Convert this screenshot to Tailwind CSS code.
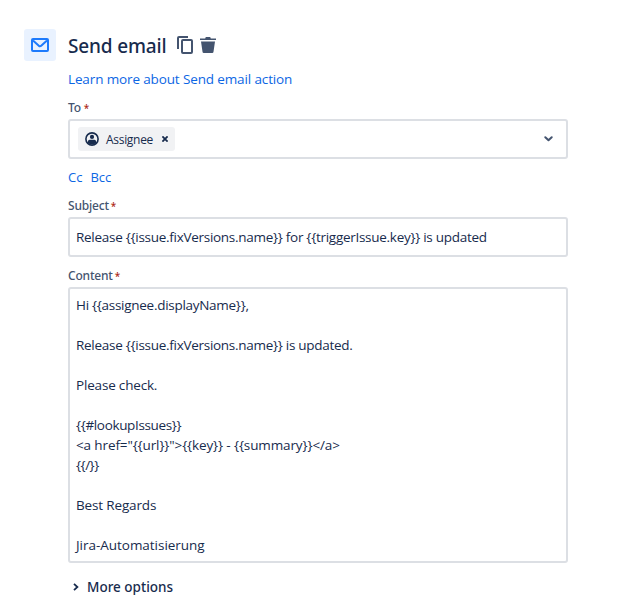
<!doctype html>
<html lang="en">
<head>
  <meta charset="UTF-8">
  <meta name="viewport" content="width=device-width, initial-scale=1.0">
  <title>Send email</title>
  <script src="https://cdn.jsdelivr.net/npm/@tailwindcss/browser@4"></script>
</head>
<body class="h-[616px] overflow-hidden bg-white font-['Open_Sans','Noto_Sans',sans-serif] text-sm leading-5 text-[#172b4d]">
  <main class="flex gap-3 pt-[29px] pl-6">
    <div class="flex size-8 shrink-0 items-center justify-center rounded-[3px] bg-[#e9f2ff]">
      <svg class="h-[14px] w-[18px]" viewBox="0 0 18 14" fill="none" stroke="#1d7afc" stroke-width="2" stroke-linejoin="round">
        <rect x="1" y="1" width="16" height="12" rx="1"></rect>
        <path d="M2 2.5l5.8 5.2a1.8 1.8 0 0 0 2.4 0L16 2.5"></path>
      </svg>
    </div>

    <div class="w-[500px]">
      <header class="flex h-8 items-center">
        <h1 class="w-[109px] pt-[2px] whitespace-nowrap font-['Noto_Sans',sans-serif] text-[19px] font-medium leading-6 tracking-[-0.15px]">Send email</h1>
        <svg class="h-[18px] w-4" viewBox="0 0 16 18" fill="none" stroke="#44546f" stroke-width="2">
          <path d="M1 13V2a1 1 0 0 1 1-1h9"></path>
          <rect x="5" y="4" width="10" height="13" rx="1"></rect>
        </svg>
        <svg class="ml-[7px] h-4 w-4" viewBox="0 0 16 16" fill="#44546f">
          <path d="M0 1.5h5.2L5.8 0h4.4l.6 1.5H16V3H0z"></path>
          <path d="M1 4.5h14l-1.5 10.3a1.3 1.3 0 0 1-1.3 1.2H3.8a1.3 1.3 0 0 1-1.3-1.2z"></path>
        </svg>
      </header>

      <a href="#" class="mt-2 block text-[13.5px] tracking-[-0.13px] text-[#0c66e4]">Learn more about Send email action</a>

      <!-- To -->
      <div class="mt-[11px] h-4 font-['Noto_Sans',sans-serif] text-[12px] font-medium leading-4 tracking-[-0.2px] text-[#44546f]">To<span class="ml-[3px] text-[10px] text-[#ae2a19]">*</span></div>
      <div class="mt-[3px] flex h-10 items-center justify-between rounded-[3px] border-2 border-[#dcdfe4] pr-[13px] pl-2">
        <div class="flex h-6 w-[97px] items-center rounded-[3px] bg-[#f1f2f4] pl-[7px]">
          <svg class="size-[14px]" viewBox="0 0 14 14">
            <circle cx="7" cy="7" r="6.1" fill="none" stroke="#172b4d" stroke-width="1.6"></circle>
            <circle cx="7" cy="4.9" r="2.1" fill="#172b4d"></circle>
            <path d="M3 11V9.3A1.5 1.5 0 0 1 4.5 7.8h5A1.5 1.5 0 0 1 11 9.3V11a6 6 0 0 1-8 0z" fill="#172b4d"></path>
          </svg>
          <span class="ml-[7px] w-[48px] pt-px text-[12px] tracking-[-0.3px]">Assignee</span>
          <svg class="ml-[8px] size-[6px]" viewBox="0 0 6 6" fill="none" stroke="#172b4d" stroke-width="1.8">
            <path d="M.4.4l5.2 5.2M5.6.4L.4 5.6"></path>
          </svg>
        </div>
        <svg class="h-[6px] w-[9px]" viewBox="0 0 9 6" fill="none" stroke="#44546f" stroke-width="2" stroke-linecap="round" stroke-linejoin="round">
          <path d="M1.3 1.3l3.2 3 3.2-3"></path>
        </svg>
      </div>

      <div class="mt-2 flex gap-2 text-[13px] text-[#0c66e4]">
        <a href="#">Cc</a>
        <a href="#">Bcc</a>
      </div>

      <!-- Subject -->
      <div class="mt-[11px] h-4 font-['Noto_Sans',sans-serif] text-[12px] font-medium leading-4 tracking-[-0.2px] text-[#44546f]">Subject<span class="ml-[2px] text-[10px] text-[#ae2a19]">*</span></div>
      <div class="mt-[3px] flex h-10 items-center rounded-[3px] border-2 border-[#dcdfe4] px-[6px] text-[13.5px] tracking-[-0.28px]">Release {{issue.fixVersions.name}} for {{triggerIssue.key}} is updated</div>

      <!-- Content -->
      <div class="mt-[11px] h-4 font-['Noto_Sans',sans-serif] text-[12px] font-medium leading-4 tracking-[-0.2px] text-[#44546f]">Content<span class="ml-[2px] text-[10px] text-[#ae2a19]">*</span></div>
      <div class="mt-[3px] h-[276px] rounded-[3px] border-2 border-[#dcdfe4] p-[6px] text-[13.5px]">
        <p class="tracking-[-0.28px]">Hi {{assignee.displayName}},</p>
        <p class="mt-5 tracking-[-0.28px]">Release {{issue.fixVersions.name}} is updated.</p>
        <p class="mt-5 tracking-[-0.18px]">Please check.</p>
        <p class="mt-5 tracking-[-0.35px]">{{#lookupIssues}}</p>
        <p class="tracking-[-0.12px]">&lt;a href="{{url}}"&gt;{{key}} - {{summary}}&lt;/a&gt;</p>
        <p class="tracking-[-0.5px]">{{/}}</p>
        <p class="mt-5 tracking-[-0.15px]">Best Regards</p>
        <p class="mt-5 tracking-[-0.03px]">Jira-Automatisierung</p>
      </div>

      <button type="button" class="mt-[14px] flex items-center pl-[5px] font-['Noto_Sans',sans-serif] text-[13.5px] font-medium">
        <svg class="h-2 w-[6px]" viewBox="0 0 6 8" fill="none" stroke="#172b4d" stroke-width="1.8">
          <path d="M1 .8L4.4 4 1 7.2"></path>
        </svg>
        <span class="ml-2">More options</span>
      </button>
    </div>
  </main>
</body>
</html>
